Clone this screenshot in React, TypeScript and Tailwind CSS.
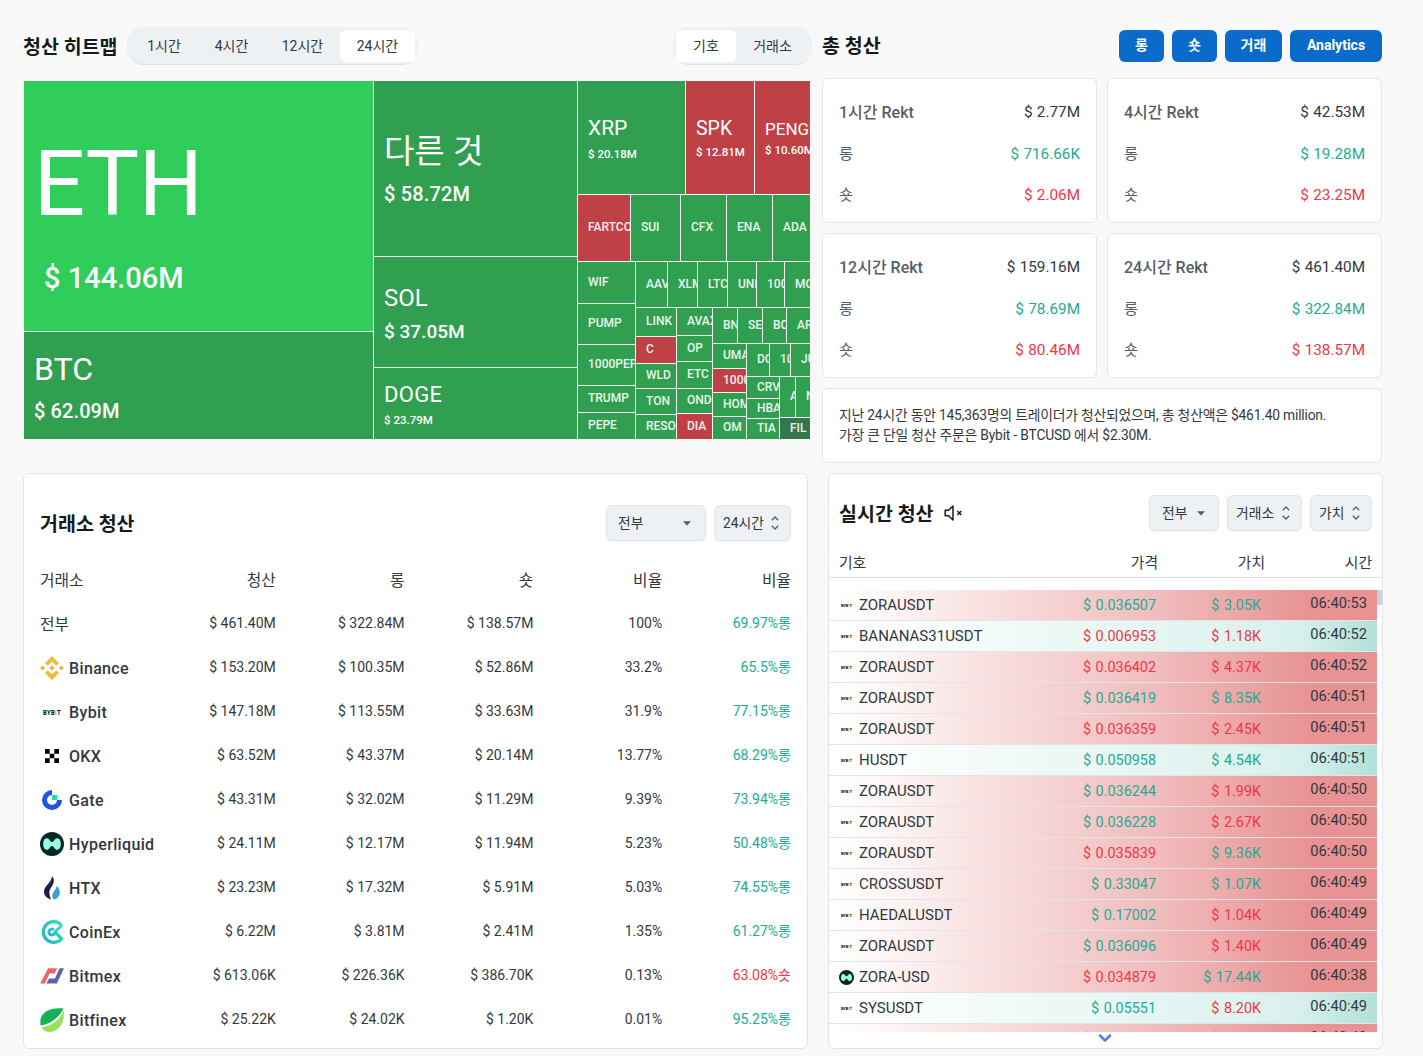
import type { ReactNode } from 'react'
import { ChevronDown } from 'lucide-react'

type Leaf = { label: string; size?: number; value?: string; tone?: 'bright' | 'red' | 'dark'; kind?: string }
type Group = { dir: 'row' | 'col'; size?: number; items: TreeNode[] }
type TreeNode = Leaf | Group

const leaf = (label: string, size?: number, tone?: Leaf['tone']): Leaf => ({ label, size, tone })

// sizes are px along the parent's axis, the last item takes what is left
const TREE: Group = {
  dir: 'row',
  items: [
    {
      dir: 'col', size: 349, items: [
        { label: 'ETH', value: '$ 144.06M', size: 250, tone: 'bright', kind: 'eth' },
        { label: 'BTC', value: '$ 62.09M', kind: 'btc' },
      ],
    },
    {
      dir: 'col', size: 203, items: [
        { label: '다른 것', value: '$ 58.72M', size: 175, kind: 'other' },
        { label: 'SOL', value: '$ 37.05M', size: 110, kind: 'sol' },
        { label: 'DOGE', value: '$ 23.79M', kind: 'doge' },
      ],
    },
    {
      dir: 'col', items: [
        {
          dir: 'row', size: 113, items: [
            { label: 'XRP', value: '$ 20.18M', size: 107, kind: 'xrp' },
            { label: 'SPK', value: '$ 12.81M', size: 68, tone: 'red', kind: 'spk' },
            { label: 'PENGU', value: '$ 10.60M', tone: 'red', kind: 'pengu' },
          ],
        },
        { dir: 'row', size: 66, items: [leaf('FARTCOIN', 52, 'red'), leaf('SUI', 49), leaf('CFX', 45), leaf('ENA', 45), leaf('ADA')] },
        {
          dir: 'row', items: [
            { dir: 'col', size: 57, items: [leaf('WIF', 41), leaf('PUMP', 40), leaf('1000PEPE', 40), leaf('TRUMP', 26), leaf('PEPE')] },
            {
              dir: 'col', items: [
                { dir: 'row', size: 45, items: [leaf('AAVE', 31), leaf('XLM', 29), leaf('LTC', 29), leaf('UNI', 28), leaf('1000', 27), leaf('MOODENG')] },
                {
                  dir: 'row', items: [
                    { dir: 'col', size: 40, items: [leaf('LINK', 28), leaf('C', 26, 'red'), leaf('WLD', 24), leaf('TON', 25), leaf('RESOLV')] },
                    { dir: 'col', size: 35, items: [leaf('AVAX', 27), leaf('OP', 25), leaf('ETC', 26), leaf('ONDO', 24), leaf('DIA', undefined, 'red')] },
                    {
                      dir: 'col', items: [
                        { dir: 'row', size: 35, items: [leaf('BNB', 24), leaf('SEI', 24), leaf('BOME', 23), leaf('ARB')] },
                        {
                          dir: 'row', items: [
                            { dir: 'col', size: 33, items: [leaf('UMA', 24), leaf('1000B', 23, 'red'), leaf('HOME', 23), leaf('OM')] },
                            {
                              dir: 'col', items: [
                                { dir: 'row', size: 32, items: [leaf('DOT', 22), leaf('1000', 20), leaf('JUP')] },
                                {
                                  dir: 'row', items: [
                                    { dir: 'col', size: 32, items: [leaf('CRV', 21), leaf('HBAR', 19), leaf('TIA')] },
                                    {
                                      dir: 'col', items: [
                                        { dir: 'row', size: 40, items: [leaf('A', 15), leaf('NEAR')] },
                                        leaf('FIL', undefined, 'dark'),
                                      ],
                                    },
                                  ],
                                },
                              ],
                            },
                          ],
                        },
                      ],
                    },
                  ],
                },
              ],
            },
          ],
        },
      ],
    },
  ],
}

const TONES = {
  green: 'bg-[#309f4f]',
  bright: 'bg-[#31cd5a]',
  red: 'bg-[#bf4045]',
  dark: 'bg-[#35764e]',
}

const LABELS: Record<string, [string, string]> = {
  eth: ['text-[90px] leading-[104px] tracking-[-0.5px] mt-[17px]', 'text-[29px] leading-9 mt-[23px] pl-[10px]'],
  btc: ['text-[32px] leading-[38px] mt-px', 'text-[20px] leading-6 mt-[11px] tracking-[0.1px]'],
  other: ['text-[33px] leading-10', 'text-[20px] leading-6 mt-[10px] tracking-[0.15px]'],
  sol: ['text-[24px] leading-7 mt-[3px]', 'text-[19px] leading-6 mt-2'],
  doge: ['text-[22px] leading-7 mt-[2px] tracking-[0.3px]', 'text-[11.500px] leading-4 mt-[3px]'],
  xrp: ['text-[21px] leading-6 mt-[3px]', 'text-[11.500px] leading-4 mt-[6px]'],
  spk: ['text-[19.500px] leading-6 mt-[2px]', 'text-[11.500px] leading-4 mt-[3px]'],
  pengu: ['text-[17px] leading-6 -mt-px', 'text-[11.500px] leading-4 mt-px'],
}

function Tile({ node, dir }: { node: TreeNode; dir: 'row' | 'col' }) {
  const style = node.size ? { [dir === 'row' ? 'width' : 'height']: node.size } : undefined
  const grow = node.size ? 'shrink-0' : 'flex-1'
  if ('items' in node) {
    return (
      <div style={style} className={`flex gap-px min-w-0 min-h-0 ${grow} ${node.dir === 'col' ? 'flex-col' : ''}`}>
        {node.items.map((n, i) => <Tile key={i} node={n} dir={node.dir}/>)}
      </div>
    )
  }
  const cls = node.kind ? LABELS[node.kind] : null
  return (
    <div
      style={style}
      className={`flex flex-col justify-center overflow-hidden whitespace-nowrap pl-[10px] min-w-0 min-h-0 text-white ${grow} ${TONES[node.tone ?? 'green']}`}
    >
      <div className={cls ? cls[0] : 'text-[12px] leading-4 font-medium -mt-[2px] text-white/90'}>{node.label}</div>
      {cls && <div className={`font-medium ${cls[1]}`}>{node.value}</div>}
    </div>
  )
}

function BybitLogo({ className }: { className: string }) {
  return (
    <svg viewBox="0 0 24 24" className={className}>
      <text x="3" y="14.6" fontSize="6.6" fontWeight="800" textLength="18" lengthAdjust="spacingAndGlyphs" fill="#17181e">
        BYB<tspan fill="#f0a92b">I</tspan>T
      </text>
    </svg>
  )
}

function HyperLogo({ className }: { className: string }) {
  return (
    <svg viewBox="0 0 24 24" className={className}>
      <circle cx="12" cy="12" r="12" fill="#072723"/>
      <path d="M3.200 12c0-3.400 1.400-5.800 3.600-5.800 2.600 0 3.400 3.800 5.200 3.800s2.600-3.800 5.200-3.800c2.200 0 3.600 2.400 3.600 5.800s-1.400 5.800-3.600 5.800c-2.600 0-3.400-3.800-5.200-3.800s-2.600 3.800-5.200 3.800C4.600 17.800 3.200 15.400 3.200 12z" fill="#97fce4"/>
    </svg>
  )
}

const ICONS: Record<string, ReactNode> = {
  Binance: (
    <svg viewBox="0 0 24 24" className="size-6" fill="#efb93a">
      <path d="M12 0l7 7-2.700 2.700L12 5.400 7.700 9.700 5 7z"/>
      <path d="M12 24l7-7-2.700-2.700-4.300 4.300-4.300-4.300L5 17z"/>
      <path d="M2.600 9.400L5.200 12l-2.600 2.600L0 12zM21.400 9.400L24 12l-2.600 2.600-2.600-2.600zM12 9.300l2.700 2.700-2.700 2.700L9.300 12z"/>
    </svg>
  ),
  Bybit: <BybitLogo className="size-6"/>,
  OKX: (
    <svg viewBox="0 0 24 24" className="size-6" fill="#000">
      <path d="M5 5h4.700v4.700H5zM14.300 5H19v4.700h-4.700zM9.700 9.700h4.600v4.600H9.700zM5 14.300h4.700V19H5zM14.300 14.300H19V19h-4.700z"/>
    </svg>
  ),
  Gate: (
    <svg viewBox="0 0 24 24" className="size-6">
      <path d="M12 4.500a7.500 7.500 0 1 0 7.500 7.500" fill="none" stroke="#2354e6" strokeWidth="5"/>
      <path d="M12 7h5v5h-5z" fill="#17e6a1"/>
    </svg>
  ),
  Hyperliquid: <HyperLogo className="size-6 shrink-0"/>,
  HTX: (
    <svg viewBox="0 0 24 24" className="size-6">
      <path d="M12 0c2.500 3 2.400 6.500.2 9.800-1.800 2.700-3.200 5-2.800 7.700.2 2.200 1 4.300 1.800 6C6.800 22.500 4 19.500 4 15.800 4 9.500 11.600 7 12 0z" fill="#1b2143"/>
      <path d="M16.700 9.800c2.100 1.900 3.200 4.200 3.100 6.900-.1 3.400-2.600 6.200-6.300 6.800-1.400-1.800-1.600-4.300-.3-6.900 1.200-2.300 3.300-3.600 3.500-6.800z" fill="#3a9fd9"/>
    </svg>
  ),
  CoinEx: (
    <svg viewBox="0 0 24 24" className="size-6">
      <defs>
        <linearGradient id="cx" x1="0" y1="1" x2="1" y2="0">
          <stop offset="0" stopColor="#1fb5d2"/>
          <stop offset="1" stopColor="#33dfaa"/>
        </linearGradient>
      </defs>
      <path d="M21.500 5.300a10.300 10.300 0 1 0 0 13.400l-6.600-6.700" fill="none" stroke="url(#cx)" strokeWidth="3.200" strokeLinejoin="round"/>
      <path d="M21.700 5.500l-6.800 6.500a3 3 0 1 1-1-2.200" fill="none" stroke="url(#cx)" strokeWidth="2.900"/>
    </svg>
  ),
  Bitmex: (
    <svg viewBox="0 0 24 24" className="size-6">
      <path d="M8 4.300h9.200l-2.400 5.200H9.600L4.800 19.600H.2z" fill="#ec6468"/>
      <path d="M19.600 4.300H24l-7.200 15.300H6.600L9 14.400h5.900z" fill="#5b63b0"/>
    </svg>
  ),
  Bitfinex: (
    <svg viewBox="0 0 24 24" className="size-6">
      <path d="M23.500.4C12-.6 4.500 2.500 1.500 8.500-.2 12 .2 15.500.8 17.600 7.500 16.500 18.500 11.500 23.500.4z" fill="#16b057"/>
      <path d="M23.700 1.500C21.500 9.500 14 17.500 1.300 19.500 4 23.500 8.300 24.600 12.500 23.600 20.500 21.500 25 13 23.700 1.500z" fill="#97e15b"/>
    </svg>
  ),
}

const EXCHANGES = [
  ['전부', '$ 461.40M', '$ 322.84M', '$ 138.57M', '100%', '69.97%롱'],
  ['Binance', '$ 153.20M', '$ 100.35M', '$ 52.86M', '33.2%', '65.5%롱'],
  ['Bybit', '$ 147.18M', '$ 113.55M', '$ 33.63M', '31.9%', '77.15%롱'],
  ['OKX', '$ 63.52M', '$ 43.37M', '$ 20.14M', '13.77%', '68.29%롱'],
  ['Gate', '$ 43.31M', '$ 32.02M', '$ 11.29M', '9.39%', '73.94%롱'],
  ['Hyperliquid', '$ 24.11M', '$ 12.17M', '$ 11.94M', '5.23%', '50.48%롱'],
  ['HTX', '$ 23.23M', '$ 17.32M', '$ 5.91M', '5.03%', '74.55%롱'],
  ['CoinEx', '$ 6.22M', '$ 3.81M', '$ 2.41M', '1.35%', '61.27%롱'],
  ['Bitmex', '$ 613.06K', '$ 226.36K', '$ 386.70K', '0.13%', '63.08%숏'],
  ['Bitfinex', '$ 25.22K', '$ 24.02K', '$ 1.20K', '0.01%', '95.25%롱'],
]

const STATS = [
  { label: '1시간 Rekt', total: '$ 2.77M', long: '$ 716.66K', short: '$ 2.06M' },
  { label: '4시간 Rekt', total: '$ 42.53M', long: '$ 19.28M', short: '$ 23.25M' },
  { label: '12시간 Rekt', total: '$ 159.16M', long: '$ 78.69M', short: '$ 80.46M' },
  { label: '24시간 Rekt', total: '$ 461.40M', long: '$ 322.84M', short: '$ 138.57M' },
]

// symbol, price, price up, value, value up, time, row side
const ORDERS: [string, string, boolean, string, boolean, string, 'r' | 'g'][] = [
  ['ZORAUSDT', '$ 0.036507', true, '$ 3.05K', true, '06:40:53', 'r'],
  ['BANANAS31USDT', '$ 0.006953', false, '$ 1.18K', false, '06:40:52', 'g'],
  ['ZORAUSDT', '$ 0.036402', false, '$ 4.37K', false, '06:40:52', 'r'],
  ['ZORAUSDT', '$ 0.036419', true, '$ 8.35K', true, '06:40:51', 'r'],
  ['ZORAUSDT', '$ 0.036359', false, '$ 2.45K', false, '06:40:51', 'r'],
  ['HUSDT', '$ 0.050958', true, '$ 4.54K', true, '06:40:51', 'g'],
  ['ZORAUSDT', '$ 0.036244', true, '$ 1.99K', false, '06:40:50', 'r'],
  ['ZORAUSDT', '$ 0.036228', true, '$ 2.67K', false, '06:40:50', 'r'],
  ['ZORAUSDT', '$ 0.035839', false, '$ 9.36K', true, '06:40:50', 'r'],
  ['CROSSUSDT', '$ 0.33047', true, '$ 1.07K', true, '06:40:49', 'r'],
  ['HAEDALUSDT', '$ 0.17002', true, '$ 1.04K', false, '06:40:49', 'r'],
  ['ZORAUSDT', '$ 0.036096', true, '$ 1.40K', false, '06:40:49', 'r'],
  ['ZORA-USD', '$ 0.034879', false, '$ 17.44K', true, '06:40:38', 'r'],
  ['SYSUSDT', '$ 0.05551', true, '$ 8.20K', false, '06:40:49', 'g'],
  ['ZORAUSDT', '$ 0.036096', true, '$ 1.40K', false, '06:40:49', 'r'],
]

const UP = 'text-[#22ab94]'
const DOWN = 'text-[#f23645]'

function Caret() {
  return (
    <svg viewBox="0 0 8 5" className="w-2 h-[5px]" fill="#555e68"><path d="M0 .3h8L4 4.500z"/></svg>
  )
}

function Unfold() {
  return (
    <svg viewBox="0 0 8 14" className="w-2 h-[14px]" fill="none" stroke="#555e68" strokeWidth="1.300">
      <path d="M.8 4.200L4 1l3.200 3.200M.8 9.800L4 13l3.200-3.200"/>
    </svg>
  )
}

function Select({ label, caret, className }: { label: string; caret?: boolean; className: string }) {
  return (
    <button className={`flex items-center justify-between h-9 rounded-md border border-[#dfe5ea] bg-[#eef1f4] shadow-xs text-[13.800px] leading-5 text-[#32383e] ${className}`}>
      <span className="-mt-px">{label}</span>
      {caret ? <Caret/> : <Unfold/>}
    </button>
  )
}

function Pill({ tabs, active }: { tabs: [string, string][]; active: number }) {
  return (
    <div className="flex items-center h-[38px] px-[2px] rounded-2xl bg-[#eef1f4] border border-t-[#edf0f3] border-x-[#edf0f3] border-b-[#dfe4e8]">
      {tabs.map(([label, width], i) => (
        <button key={label} className={`h-8 text-[14px] leading-5 text-[#32383e] ${width} ${i === active ? 'bg-white rounded-md' : ''}`}>
          {label}
        </button>
      ))}
    </div>
  )
}

function StatCard({ s }: { s: (typeof STATS)[number] }) {
  return (
    <div className="w-[275px] h-[145px] rounded-md border border-[#e2e4e6] bg-white px-4 pt-[13px] text-[15.300px]">
      <div className="flex items-center justify-between h-[41px]">
        <span className="font-medium text-[16px] text-[#555e68]">{s.label}</span>
        <span className="text-[#32383e] [word-spacing:0.5px]">{s.total}</span>
      </div>
      <div className="flex items-center justify-between h-[41px] pt-px">
        <span className="text-[#555e68]">롱</span>
        <span className={`[word-spacing:0.5px] ${UP}`}>{s.long}</span>
      </div>
      <div className="flex items-center justify-between h-[41px] pt-px">
        <span className="text-[#555e68]">숏</span>
        <span className={`[word-spacing:0.5px] ${DOWN}`}>{s.short}</span>
      </div>
    </div>
  )
}

function ExchangePanel() {
  return (
    <div className="w-[785px] h-[576px] rounded-md border border-[#e2e4e6] bg-white px-4 pt-[31px]">
      <div className="flex items-center justify-between h-9">
        <h2 className="mt-[3px] text-[19.500px] leading-7 font-bold text-[#171a1c]">거래소 청산</h2>
        <div className="flex gap-2">
          <Select label="전부" caret className="w-[100px] pl-[11px] pr-[14px]"/>
          <Select label="24시간" className="w-[77px] pl-2 pr-[11px]"/>
        </div>
      </div>
      <div className="mt-[17px] pt-px grid grid-cols-[107px_repeat(5,1fr)] items-center h-11 text-[15.800px] text-right text-[#32383e]">
        <span className="text-left">거래소</span>
        <span>청산</span>
        <span>롱</span>
        <span>숏</span>
        <span>비율</span>
        <span>비율</span>
      </div>
      {EXCHANGES.map(([name, ...cells]) => (
        <div key={name} className="grid grid-cols-[107px_repeat(5,1fr)] items-center h-11 text-[14px] text-right text-[#32383e]">
          {ICONS[name] ? (
            <div className="flex items-center gap-[5px] text-[16px] font-medium tracking-[0.35px]">
              {ICONS[name]}
              <span className="pt-[2px]">{name}</span>
            </div>
          ) : (
            <div className="pt-[2px] text-left text-[15.800px]">{name}</div>
          )}
          {cells.map((c, i) => (
            <span key={i} className={`-mt-px ${i < 4 ? '' : c.endsWith('롱') ? UP : DOWN}`}>{c}</span>
          ))}
        </div>
      ))}
    </div>
  )
}

function LivePanel() {
  return (
    <div className="w-[555px] h-[576px] rounded-md border border-[#e2e4e6] bg-white pt-[21px]">
      <div className="flex items-center justify-between h-9 pl-[10px] pr-[10px]">
        <div className="flex items-center gap-[10px]">
          <h2 className="mt-[3px] text-[19.500px] leading-7 font-bold text-[#171a1c]">실시간 청산</h2>
          <svg viewBox="0 0 20 18" className="w-5 h-[18px]" fill="none" stroke="#171a1c" strokeWidth="1.500" strokeLinejoin="round">
            <path d="M1.200 6.300h3.300L9 2v14l-4.500-4.300H1.200z"/>
            <path d="M13.300 7l4 4M17.300 7l-4 4"/>
          </svg>
        </div>
        <div className="flex gap-2">
          <Select label="전부" caret className="w-[70px] pl-3 pr-[13px]"/>
          <Select label="거래소" className="w-[75px] pl-2 pr-[11px]"/>
          <Select label="가치" className="w-[62px] pl-2 pr-[11px]"/>
        </div>
      </div>
      <div className="flex items-center h-[30px] mt-[17px] pt-px px-[10px] border-b border-[#dfe3e6] text-[14.800px] text-[#32383e] text-right">
        <span className="flex-1 text-left">기호</span>
        <span className="w-[100px]">가격</span>
        <span className="w-[107px]">가치</span>
        <span className="w-[107px]">시간</span>
      </div>
      <div className="flex mt-3 h-[442px]">
        <div className="w-[548px] overflow-hidden">
          {ORDERS.map(([symbol, price, priceUp, value, valueUp, time, side], i) => (
            <div
              key={i}
              className={`flex items-center h-[31px] pl-[10px] pr-[10px] border-b border-[#e2e4e6] bg-linear-to-r text-right text-[14.400px] text-[#32383e] ${side === 'r' ? 'from-white from-2% via-[#f0bcbd] via-60% to-[#e89293] to-88%' : 'from-white from-3% via-[#d9f1ed] via-85% to-[#b1e0d8]'}`}
            >
              {symbol === 'ZORA-USD' ? <HyperLogo className="size-[15px]"/> : <BybitLogo className="size-[15px]"/>}
              <span className="flex-1 pl-[5px] text-left text-[15px]">{symbol}</span>
              <span className={`w-[100px] pt-[2px] [word-spacing:1px] ${priceUp ? UP : DOWN}`}>{price}</span>
              <span className={`w-[105px] pt-[2px] [word-spacing:1px] ${valueUp ? UP : DOWN}`}>{value}</span>
              <span className="w-[106px] -mt-[3px] text-[14.700px]">{time}</span>
            </div>
          ))}
        </div>
        <div className="w-[5px] h-[15px] bg-[#cdd0dc]"/>
      </div>
      <ChevronDown size={20} strokeWidth={3} color="#5c7ce6" className="ml-[266px] -mt-[4px]"/>
    </div>
  )
}

export default function App() {
  return (
    <div className="w-[1423px] h-[1056px] overflow-hidden bg-[#f9f9f9] pt-[27px] pl-[23px] font-[Roboto,'Noto_Sans_CJK_KR',sans-serif]">
      <div className="flex h-[446px]">
        {/* Heatmap */}
        <div className="w-[799px]">
          <div className="flex items-center h-[38px]">
            <h2 className="w-[104px] mt-[3px] text-[19.500px] leading-7 font-bold text-[#171a1c] whitespace-nowrap">청산 히트맵</h2>
            <Pill active={3} tabs={[['1시간', 'w-[68px]'], ['4시간', 'w-[67px]'], ['12시간', 'w-[75px]'], ['24시간', 'w-[75px]']]}/>
            <div className="ml-auto mr-[10px]">
              <Pill active={0} tabs={[['기호', 'w-[60px]'], ['거래소', 'w-[73px]']]}/>
            </div>
          </div>
          <div className="flex w-[786px] h-[358px] mt-4 ml-px bg-[#f4f8f5] overflow-hidden">
            <Tile node={TREE} dir="row"/>
          </div>
        </div>

        {/* Totals */}
        <div className="w-[560px]">
          <div className="flex items-center justify-between h-[38px]">
            <h2 className="mt-[2px] text-[19.500px] leading-7 font-bold text-[#171a1c]">총 청산</h2>
            <div className="flex gap-2">
              {[['롱', 'w-[45px]'], ['숏', 'w-[45px]'], ['거래', 'w-[57px]'], ['Analytics', 'w-[92px]']].map(([label, width]) => (
                <button key={label} className={`h-8 rounded-md bg-[#0b6bcb] text-white text-[14px] leading-5 font-bold pb-[2px] ${width}`}>{label}</button>
              ))}
            </div>
          </div>
          <div className="grid grid-cols-2 gap-[10px] mt-[13px]">
            {STATS.map(s => <StatCard key={s.label} s={s}/>)}
          </div>
          <div className="h-[75px] mt-[10px] px-4 pt-4 rounded-md border border-[#e2e4e6] bg-white text-[13.800px] leading-5 tracking-[-0.180px] text-[#32383e]">
            <p>지난 24시간 동안 145,363명의 트레이더가 청산되었으며, 총 청산액은 $461.40 million.</p>
            <p>가장 큰 단일 청산 주문은 Bybit - BTCUSD 에서 $2.30M.</p>
          </div>
        </div>
      </div>

      <div className="flex gap-5">
        <ExchangePanel/>
        <LivePanel/>
      </div>
    </div>
  )
}
